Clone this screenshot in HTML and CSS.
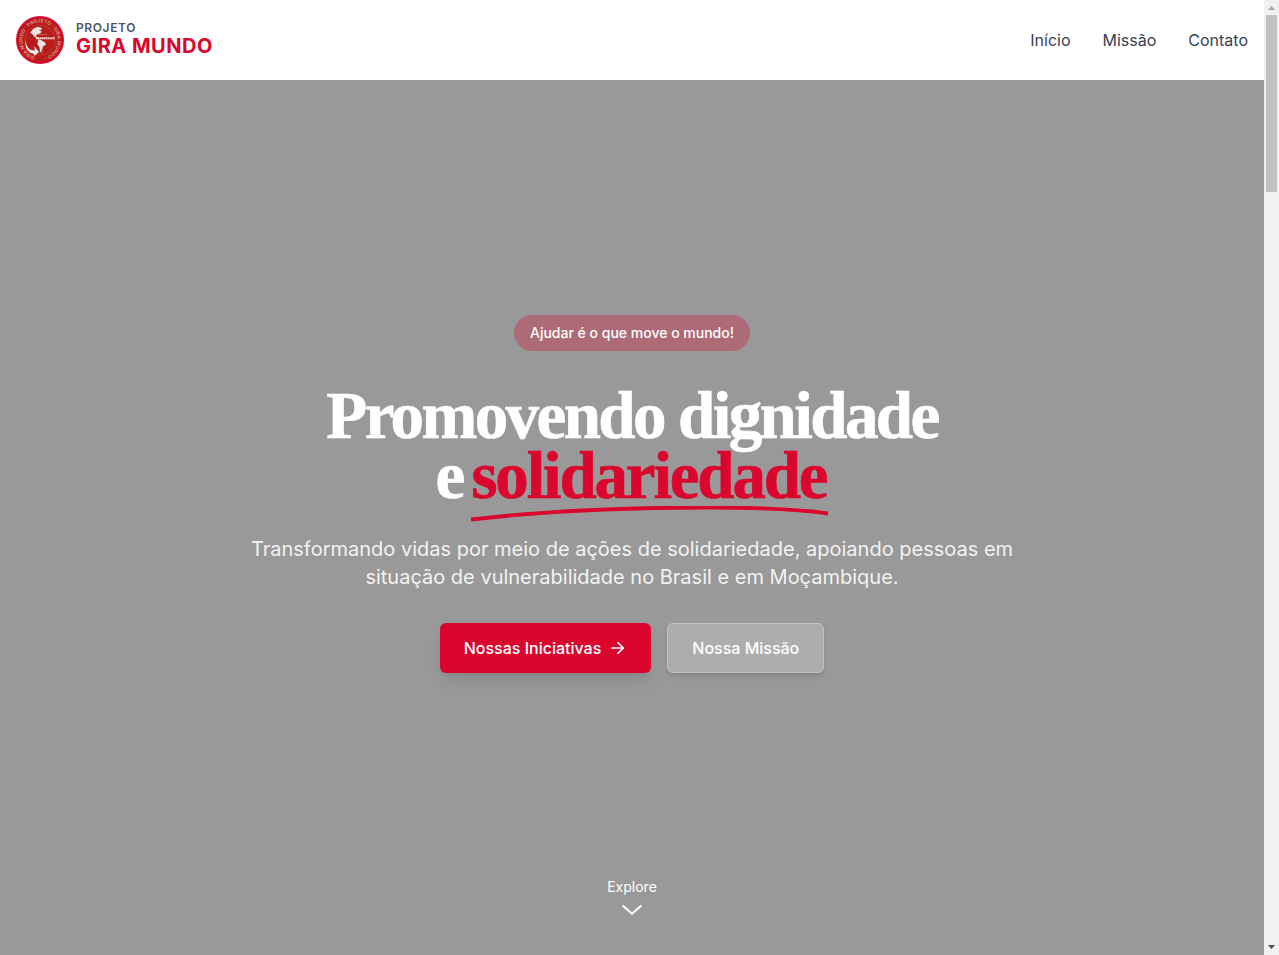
FILE: index.html
```html
<!DOCTYPE html>
<html lang="pt-BR">
<head>
<meta charset="utf-8">
<title>Projeto Gira Mundo</title>
<link rel="stylesheet" href="styles.css">
</head>
<body>
<div class="page">
  <header class="header">
    <a class="brand">
      <svg class="logo" viewBox="0 0 48 48">
        <circle cx="24" cy="24" r="24" fill="#db062d"/>
        <circle cx="24" cy="24" r="22.2" fill="#b71c1c"/>
        <circle cx="24" cy="24" r="15" fill="none" stroke="#c9544c" stroke-width=".5"/>
        <path id="ring" d="M24 41.5A17.5 17.5 0 1 1 24.1 41.5" fill="none"/>
        <text class="ring-text"><textPath href="#ring" startOffset="5" textLength="100">GIRA MUNDO · PROJETO · GIRA MUNDO ·</textPath></text>
        <path fill="#eee5e1" d="M14 17l3-4 4-2 4 .5 1 2-3 1 3 1-2 2-3 1-1 2 2 1 2 2-2-.5-4-2.500-2-3zM22 23.500l3 .5 4 2.500 1 2-3 2-1 4-2 2-.5-5-2-3z"/>
        <path fill="#f0e9e6" d="M10 24c-.5 7 4 11 9 10.500l-1-4.500 5 6-5 4-.3-2.500C12 37.500 8 31 10 24z"/>
        <path d="M20 22.300h19" stroke="#f0ddd8" stroke-width="2" stroke-dasharray="1.500 .4"/>
        <path d="M23 18.500h8M25 36.500l3-1" stroke="#d5958e" stroke-width=".8" stroke-dasharray="1 .4"/>
      </svg>
      <span class="brand-text"><span class="brand-top">PROJETO</span><span class="brand-name">GIRA MUNDO</span></span>
    </a>
    <nav class="nav"><a>Início</a><a>Missão</a><a>Contato</a></nav>
  </header>
  <main class="hero">
    <div class="content">
      <span class="badge">Ajudar é o que move o mundo!</span>
      <h1 class="title">
        <span class="line first">Promovendo dignidade</span>
        <span class="line"><span class="and">e</span><span class="accent"><span class="accent-word">solidariedade</span>
          <svg class="underline" viewBox="0 0 357 16"><path d="M0 13.500C90 3 190 1.500 238 1.500S330 3.500 357 7.500" fill="none" stroke="#db062d" stroke-width="3.800"/></svg>
        </span></span>
      </h1>
      <p class="lead">Transformando vidas por meio de ações de solidariedade, apoiando pessoas em<br>situação de vulnerabilidade no Brasil e em Moçambique.</p>
      <div class="actions">
        <a class="btn primary">Nossas Iniciativas
          <svg width="18" height="18" viewBox="0 0 24 24" fill="none" stroke="currentColor" stroke-width="2.300" stroke-linecap="round" stroke-linejoin="round"><path d="M4 12h15M12 5l7 7-7 7"/></svg>
        </a>
        <a class="btn secondary">Nossa Missão</a>
      </div>
    </div>
    <a class="explore"><span>Explore</span>
      <svg width="24" height="24" viewBox="0 0 24 24" fill="none" stroke="currentColor" stroke-width="2.200"><path d="M2.500 7.500L12 15.500l9.500-8"/></svg>
    </a>
  </main>
</div>
<div class="scrollbar">
  <svg width="15" height="15" viewBox="0 0 15 15"><path d="M4 10h7L7.500 6z" fill="#a3a3a3"/></svg>
  <div class="thumb"></div>
  <svg class="down" width="15" height="15" viewBox="0 0 15 15"><path d="M4 5h7L7.500 9z" fill="#505050"/></svg>
</div>
</body>
</html>
```
FILE: styles.css
```css
* { box-sizing: border-box; }
body {
  margin: 0;
  display: flex;
  height: 955px;
  overflow: hidden;
  font-family: Inter, sans-serif;
}
.page { flex: 1; display: flex; flex-direction: column; }
.header {
  height: 80px;
  padding: 0 16px;
  display: flex;
  align-items: center;
  justify-content: space-between;
  background: #fff;
}
.brand { display: flex; align-items: center; gap: 12px; }
.logo { width: 48px; height: 48px; display: block; }
.ring-text { font: 700 4.8px Inter, sans-serif; fill: #d98d84; }
.brand-text { display: flex; flex-direction: column; padding-bottom: 4px; }
.brand-top { font-size: 12px; line-height: 16px; font-weight: 600; letter-spacing: .6px; color: #4b5563; }
.brand-name { font-size: 20px; line-height: 20px; font-weight: 700; letter-spacing: .5px; color: #db062d; }
.nav { display: flex; gap: 32px; font-size: 16px; line-height: 24px; color: #374151; }
.hero {
  flex: 1;
  background: #999;
  display: flex;
  flex-direction: column;
  align-items: center;
  justify-content: space-between;
  padding: 235px 0 33px;
}
.content { display: flex; flex-direction: column; align-items: center; }
.badge {
  height: 36px;
  padding: 0 16px;
  border-radius: 18px;
  background: #ad6b77;
  color: #fff;
  font-size: 14px;
  line-height: 36px;
  font-weight: 500;
}
.title {
  margin: 34px 0 0;
  font-family: "Liberation Serif", serif;
  font-size: 67px;
  line-height: 60px;
  font-weight: 700;
  color: #fff;
  -webkit-text-stroke: .7px currentColor;
}
.line { display: flex; justify-content: center; white-space: nowrap; }
.first { letter-spacing: -2.6px; }
.and { width: 36px; }
.accent { position: relative; width: 357px; color: #db062d; }
.accent-word { display: block; letter-spacing: -2.2px; }
.underline { position: absolute; left: 0; top: 61px; width: 357px; height: 16px; }
.lead {
  margin: 30px 0 0;
  font-size: 20px;
  line-height: 28px;
  text-align: center;
  color: rgba(255, 255, 255, .9);
}
.actions { display: flex; gap: 16px; margin-top: 32px; }
.btn {
  height: 50px;
  padding: 0 24px;
  display: flex;
  align-items: center;
  border-radius: 6px;
  font-size: 16px;
  font-weight: 500;
  color: #fff;
}
.primary { gap: 8px; background: #db062d; box-shadow: 0 10px 15px -3px rgba(0,0,0,.1), 0 4px 6px -4px rgba(0,0,0,.1); }
.secondary { background: #adadad; border: 1px solid #c2c2c2; box-shadow: 0 4px 6px -1px rgba(0,0,0,.1), 0 2px 4px -2px rgba(0,0,0,.1); }
.explore { display: flex; flex-direction: column; align-items: center; font-size: 14px; line-height: 20px; color: #fff; gap: 1px; }
.scrollbar { width: 15px; background: #f1f1f1; display: flex; flex-direction: column; }
.thumb { height: 177px; margin: 0 2px; background: #c1c1c1; }
.down { margin-top: auto; }
```
